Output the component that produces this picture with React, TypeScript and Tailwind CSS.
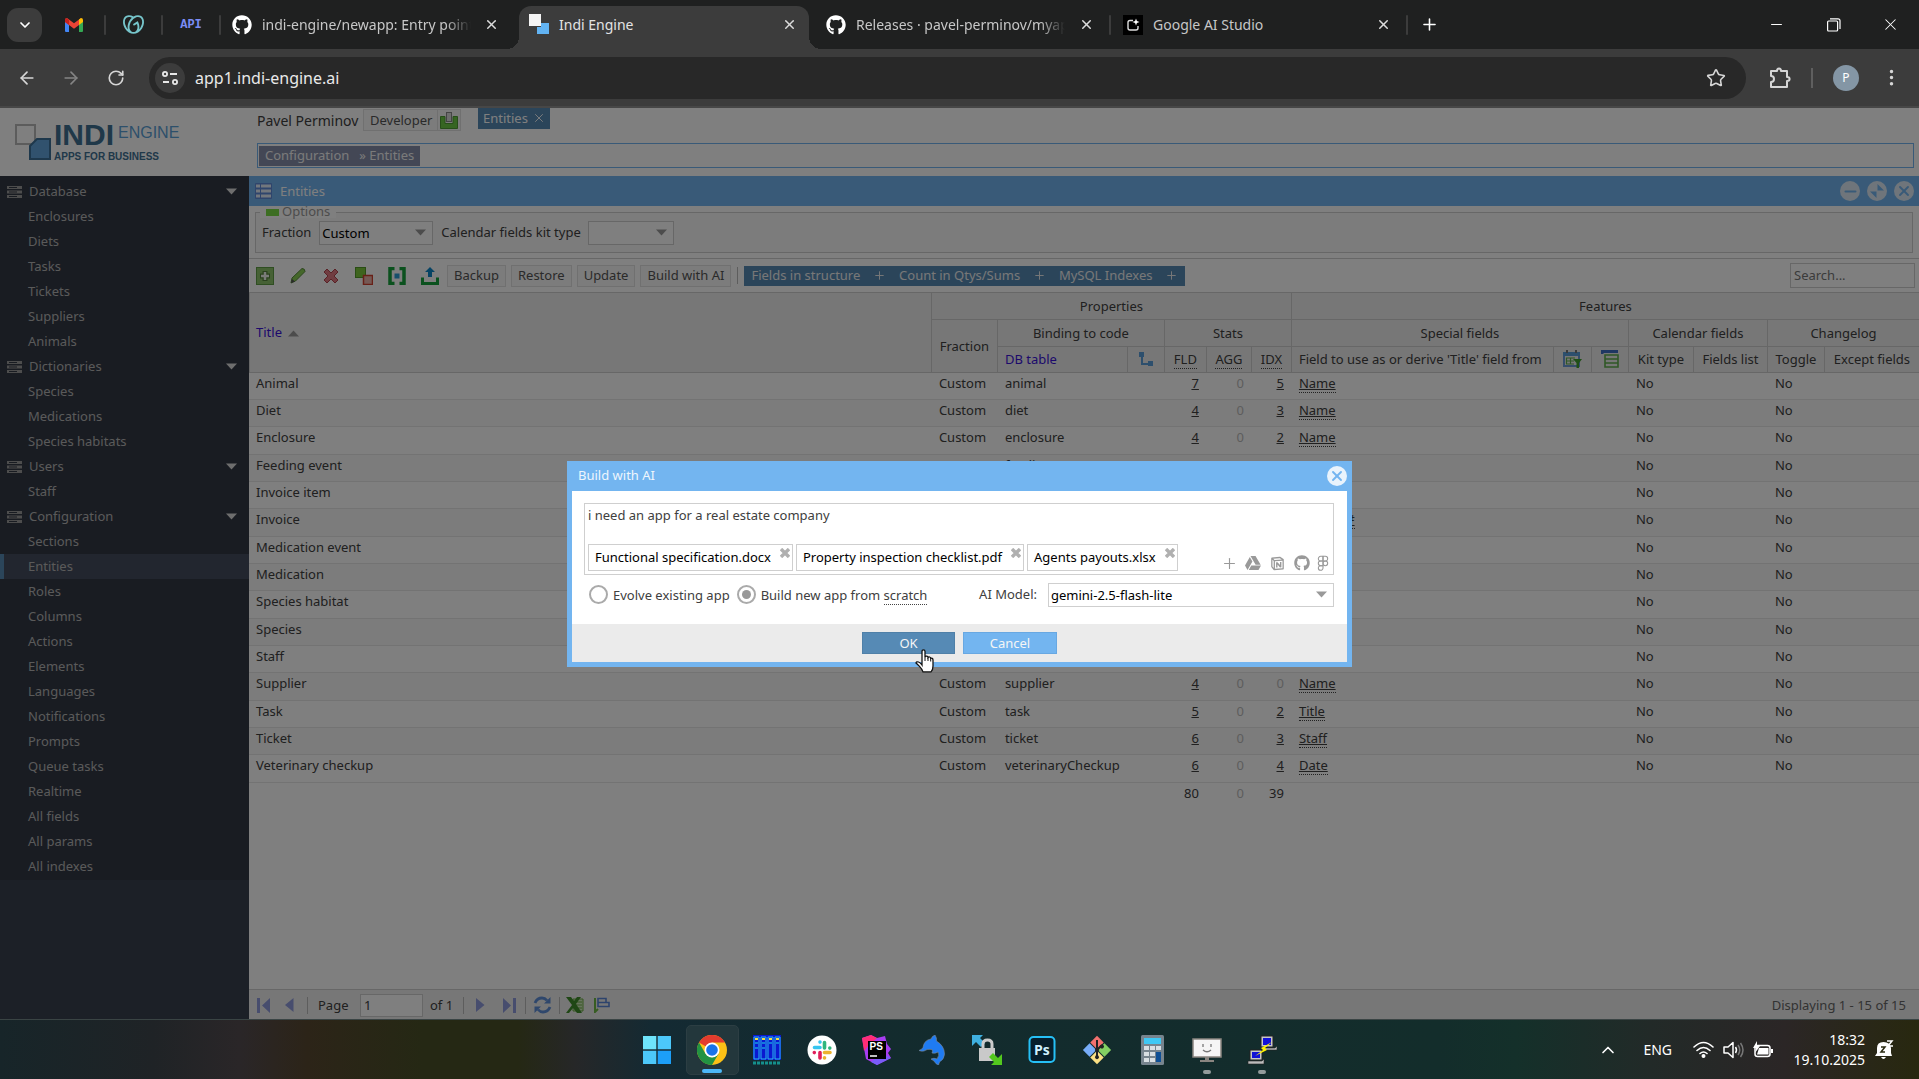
import React from 'react'
import { ArrowLeft, ArrowRight, ChevronDown, ChevronUp, EllipsisVertical, Figma, Minus, Plus, RotateCw, Star, X } from 'lucide-react'
import { FaGithub, FaGoogleDrive } from 'react-icons/fa'
import { RiNotionLine } from 'react-icons/ri'
import { SiGodaddy } from 'react-icons/si'

type Entity = [title: string, table: string, fld: number, idx: number, field: string]

const entities: Entity[] = [
  ['Animal', 'animal', 7, 5, 'Name'],
  ['Diet', 'diet', 4, 3, 'Name'],
  ['Enclosure', 'enclosure', 4, 2, 'Name'],
  ['Feeding event', 'feedingEvent', 5, 3, 'Date'],
  ['Invoice item', 'invoiceItem', 5, 2, 'Title'],
  ['Invoice', 'invoice', 6, 3, 'Invoice #'],
  ['Medication event', 'medicationEvent', 6, 3, 'Date'],
  ['Medication', 'medication', 4, 1, 'Name'],
  ['Species habitat', 'speciesHabitat', 3, 2, 'Title'],
  ['Species', 'species', 3, 1, 'Name'],
  ['Staff', 'staff', 5, 2, 'Name'],
  ['Supplier', 'supplier', 4, 0, 'Name'],
  ['Task', 'task', 5, 2, 'Title'],
  ['Ticket', 'ticket', 6, 3, 'Staff'],
  ['Veterinary checkup', 'veterinaryCheckup', 6, 4, 'Date'],
]

const menu = [
  { title: 'Database', items: ['Enclosures', 'Diets', 'Tasks', 'Tickets', 'Suppliers', 'Animals'] },
  { title: 'Dictionaries', items: ['Species', 'Medications', 'Species habitats'] },
  { title: 'Users', items: ['Staff'] },
  {
    title: 'Configuration',
    items: ['Sections', 'Entities', 'Roles', 'Columns', 'Actions', 'Elements', 'Languages', 'Notifications', 'Prompts', 'Queue tasks', 'Realtime', 'All fields', 'All params', 'All indexes'],
  },
]

const Caret = ({ className = '' }: { className?: string }) => (
  <svg className={className} width="11" height="7" viewBox="0 0 11 7" fill="currentColor">
    <path d="M0 0.5h11L5.5 6.5z" />
  </svg>
)

const TabSeparator = () => <span className="h-5 w-[2px] rounded bg-[#3c3c3c]" />

const CloseTab = ({ label }: { label: string }) => (
  <button aria-label={label} className="flex w-5 shrink-0 justify-center text-[#dcdcdc]">
    <X size={15} strokeWidth={2.4} />
  </button>
)

const IndiIcon = () => (
  <svg width="20" height="20" viewBox="0 0 20 20" className="shrink-0">
    <rect x="0" y="0" width="12" height="12" fill="#f4f4f4" />
    <path d="M12 9h8v11H8v-7h4z" fill="#62b3f2" />
  </svg>
)

const GmailIcon = () => (
  <svg width="18" height="14" viewBox="0 0 18 14">
    <path d="M0 2v11q0 1 1 1h3V5z" fill="#4285f4" />
    <path d="M18 2v11q0 1-1 1h-3V5z" fill="#34a853" />
    <path d="M4 7 0 4V2q0-2 2-2l7 5.300L16 0l-2 7-5 3.800z" fill="#ea4335" />
    <path d="M14 1.500V7l4-3V2q0-2-2-2z" fill="#fbbc04" />
    <path d="M0 4V2q0-1.500 1.500-2L4 2v5z" fill="#c5221f" />
  </svg>
)

const Browser = () => (
  <header className="shrink-0 bg-[#1f2020] font-['Noto_Sans',sans-serif] text-[14px] text-[#c7c7c7]">
    <div className="flex h-[49px] items-end">
      <div className="flex h-[49px] w-[519px] shrink-0 items-center pl-[7px]">
        <button aria-label="Search tabs" className="flex h-[34px] w-[35px] items-center justify-center rounded-[11px] bg-[#3c3c3c] text-white">
          <ChevronDown size={16} strokeWidth={2.6} />
        </button>
        <a href="#" aria-label="Gmail" className="ml-px flex w-[61px] justify-center"><GmailIcon /></a>
        <TabSeparator />
        <a href="#" aria-label="GoDaddy" className="flex w-[55px] justify-center text-[#76c5cb]"><SiGodaddy size={21} /></a>
        <TabSeparator />
        <a href="#" className="w-[56px] text-center font-['Liberation_Mono',monospace] text-[12px] font-bold text-[#7b8cf4]">API</a>
        <TabSeparator />
        <FaGithub size={20} className="ml-[11px] shrink-0 text-white" />
        <span className="ml-[10px] w-[209px] overflow-hidden whitespace-nowrap [mask-image:linear-gradient(to_right,#000_88%,transparent)]">indi-engine/newapp: Entry point</span>
        <span className="ml-[10px] flex"><CloseTab label="Close newapp tab" /></span>
      </div>
      <div className="relative flex h-[43px] w-[290px] shrink-0 items-center rounded-t-[12px] bg-[#3c3c3c] pb-[7px] pl-[10px] pr-[10px] text-[#e3e3e3] before:absolute before:bottom-0 before:-left-3 before:size-3 before:bg-[radial-gradient(circle_at_0_0,transparent_12px,#3c3c3c_12px)] after:absolute after:-right-3 after:bottom-0 after:size-3 after:bg-[radial-gradient(circle_at_100%_0,transparent_12px,#3c3c3c_12px)]">
        <IndiIcon />
        <span className="ml-[10px] flex-1">Indi Engine</span>
        <CloseTab label="Close Indi Engine tab" />
      </div>
      <div className="flex h-[49px] flex-1 items-center pl-[17px]">
        <FaGithub size={20} className="shrink-0 text-white" />
        <span className="ml-[10px] w-[209px] overflow-hidden whitespace-nowrap [mask-image:linear-gradient(to_right,#000_88%,transparent)]">Releases · pavel-perminov/myapp</span>
        <span className="ml-[11px] mr-[13px] flex"><CloseTab label="Close Releases tab" /></span>
        <TabSeparator />
        <svg className="ml-3 shrink-0" width="20" height="20" viewBox="0 0 20 20">
          <rect width="20" height="20" fill="#000" />
          <path d="M10 5.500H7q-2 0-2 2V13q0 2 2 2h6q2 0 2-2v-2" fill="none" stroke="#ddd" strokeWidth="1.400" />
          <path d="M13 3.500l.9 2.600 2.600.9-2.600.9-.9 2.600-.9-2.600-2.600-.9 2.600-.9z" fill="#fff" />
        </svg>
        <span className="ml-[10px] w-[220px]">Google AI Studio</span>
        <span className="mr-[13px] flex"><CloseTab label="Close AI Studio tab" /></span>
        <TabSeparator />
        <button aria-label="New tab" className="ml-3 text-white"><Plus size={19} strokeWidth={2} /></button>
        <div className="ml-auto flex text-white">
          <button aria-label="Minimize" className="flex w-[57px] items-center justify-center"><Minus size={17} strokeWidth={1.4} /></button>
          <button aria-label="Restore" className="flex w-[57px] items-center justify-center">
            <svg width="14" height="14" viewBox="0 0 14 14" fill="none" stroke="currentColor" strokeWidth="1.2">
              <rect x="0.6" y="3" width="10" height="10" rx="1" />
              <path d="M3 0.8h8q2 0 2 2V11" />
            </svg>
          </button>
          <button aria-label="Close" className="flex w-[57px] justify-center"><X size={19} strokeWidth={1.3} /></button>
        </div>
      </div>
    </div>
    <div className="flex h-[59px] items-center border-b-2 border-[#474747] bg-[#3c3c3c] pl-[17px] text-[#d6d6d6]">
      <button aria-label="Back" className="w-[44px]"><ArrowLeft size={20} /></button>
      <button aria-label="Forward" className="w-[46px] text-[#848484]"><ArrowRight size={20} /></button>
      <button aria-label="Reload" className="w-[42px]"><RotateCw size={18} strokeWidth={2.2} /></button>
      <div className="flex h-[42px] flex-1 items-center rounded-full bg-[#282828] pl-[6px] pr-[20px]">
        <button aria-label="Site information" className="flex size-[30px] items-center justify-center rounded-full bg-[#3c3c3c]">
          <svg width="16" height="14" viewBox="0 0 16 14" fill="none" stroke="#e8e8e8" strokeWidth="1.8">
            <circle cx="3" cy="3" r="2.1" />
            <path d="M8 3h7M1 11h6" />
            <circle cx="13" cy="11" r="2.1" />
          </svg>
        </button>
        <input aria-label="Address" defaultValue="app1.indi-engine.ai" className="ml-[10px] min-w-0 flex-1 bg-transparent text-[16px] text-[#e9e9e9] outline-none" />
        <button aria-label="Bookmark"><Star size={20} strokeWidth={1.9} /></button>
      </div>
      <button aria-label="Extensions" className="ml-[23px]">
        <svg width="22" height="22" viewBox="0 0 22 22" fill="none" stroke="currentColor" strokeWidth="2" strokeLinejoin="round">
          <path d="M2 4h6q0-2.6 2-2.6T12 4h6v6q2.600 0 2.600 2t-2.600 2v6H2v-5q3 0 3-3t-3-3z" />
        </svg>
      </button>
      <span className="ml-[20px] h-5 w-[2px] bg-[#5f5f5f]" />
      <button className="ml-5 flex size-[26px] items-center justify-center rounded-full bg-[#8496a5] text-[12px] text-white">P</button>
      <button aria-label="Menu" className="ml-[22px] mr-[17px]"><EllipsisVertical size={21} /></button>
    </div>
  </header>
)

const Logo = () => (
  <a href="#" aria-label="Indi Engine" className="flex w-[249px] shrink-0 items-start pl-[15px] pt-[16px] font-['Liberation_Sans',sans-serif] font-bold">
    <svg width="36" height="36" viewBox="0 0 36 36" className="shrink-0">
      <rect x="1" y="1" width="19" height="19" fill="#fff" stroke="#b8b8b8" strokeWidth="2" />
      <path d="M22 15h13v20H15V22z" fill="#62a5dd" stroke="#3c7199" strokeWidth="2" />
    </svg>
    <div className="-mt-1 ml-[3px]">
      <div className="flex gap-1">
        <span className="text-[30px] leading-[30px] text-[#3f7093]">INDI</span>
        <span className="pt-px text-[16px] leading-[24px] font-normal text-[#5aa0d6]">ENGINE</span>
      </div>
      <div className="text-[10px] leading-[14px] text-[#3f7093]">APPS FOR BUSINESS</div>
    </div>
  </a>
)

const TopBar = () => (
  <div className="flex h-[68px] shrink-0">
    <Logo />
    <div className="flex-1 pl-2 pr-[5px]">
      <div className="flex h-[35px] items-start">
        <span className="w-[106px] pt-[3px] text-[14px]">Pavel Perminov</span>
        <button className="mt-px flex h-[22px] items-center border border-[#e0e0e0] bg-[#f8f8f8] pl-[6px] text-[#555]">
          Developer
          <span className="ml-[5px] flex h-full items-center border-l border-[#e0e0e0] px-[2px]">
            <svg width="18" height="17" viewBox="0 0 18 17">
              <path d="M.5 4.500h4.500v7h8v-7h4.500v12H.5z" fill="#6ccb45" stroke="#4f9c33" />
              <rect x="6.500" y="0.500" width="5" height="9" fill="#ddd" stroke="#888" />
            </svg>
          </span>
        </button>
        <button className="ml-[17px] flex h-[21px] w-[72px] items-center justify-center gap-1 bg-[#568ab5] pb-px text-white">Entities <X size={14} strokeWidth={1.600} /></button>
      </div>
      <nav className="flex h-[25px] items-center border border-[#73b5f0] px-px">
        <span className="flex h-5 items-center gap-[10px] bg-[#868fab] px-[6px] pb-[2px] text-[#f5f5f5]"><a href="#">Configuration</a><a href="#">» Entities</a></span>
      </nav>
    </div>
  </div>
)

const Sidebar = () => (
  <nav className="w-[249px] shrink-0 bg-[#38404f]">
    <div className="bg-[#333945] pb-px pt-[3px] text-[#b5b5b5]">
      {menu.map((group) => (
        <div key={group.title}>
          <button className="flex h-[25px] w-full items-center pl-[7px] pr-[12px]">
            <svg width="15" height="12" viewBox="0 0 15 12" className="mr-[7px]">
              <path d="M0 0h15v3H0zM0 4.500h15v3H0zM0 9h15v3H0z" fill="#9a9a9a" />
              <path d="M2 1.500h8M2 6h8M2 10.500h8" stroke="#333945" strokeWidth="1" />
            </svg>
            <span className="pb-[2px]">{group.title}</span>
            <Caret className="ml-auto text-[#dcdcdc]" />
          </button>
          {group.items.map((item) => (
            <a key={item} href="#" className={item === 'Entities' ? 'flex h-[25px] items-center border-l-4 border-[#568ab5] bg-[#454d5e] pb-[2px] pl-6' : 'flex h-[25px] items-center pb-[2px] pl-7'}>{item}</a>
          ))}
        </div>
      ))}
    </div>
  </nav>
)

const PanelTitle = () => (
  <div className="flex h-[30px] shrink-0 items-center bg-[#73b5f0] pl-[6px] pr-[5px] text-white">
    <svg width="17" height="16" viewBox="0 0 17 16" className="mr-2">
      <rect width="17" height="16" rx="1" fill="#5f8ad8" />
      <path d="M1 1.500h4v3H1zM6 1.500h10v3H6zM1 6.500h4v3H1zM6 6.500h10v3H6zM1 11.500h4v3H1zM6 11.500h10v3H6z" fill="#e4effb" />
    </svg>
    <span className="pb-px">Entities</span>
    <div className="ml-auto flex gap-[7px] text-[#73b5f0]">
      <button aria-label="Minimize panel" className="flex size-5 items-center justify-center rounded-full bg-[#deebf6]"><Minus size={17} strokeWidth={3} /></button>
      <button aria-label="Maximize panel" className="flex size-5 items-center justify-center rounded-full bg-[#deebf6]">
        <svg width="16" height="16" viewBox="0 0 16 16" fill="currentColor"><path d="M8.500 1 15 7.500H8.500zM1 8.500h6.500V15z" /></svg>
      </button>
      <button aria-label="Close panel" className="flex size-5 items-center justify-center rounded-full bg-[#deebf6]"><X size={16} strokeWidth={2.800} /></button>
    </div>
  </div>
)

const Options = () => (
  <div className="shrink-0 px-[6px] pb-[5px]">
    <fieldset className="h-[47px] border border-[#cfcfcf] bg-[#f8f8f8] px-[6px]">
      <legend className="ml-[-2px] flex h-[12px] items-center gap-[3px] bg-white pl-[6px] pr-[6px] text-[#999]">
        <span className="mt-px h-[7px] w-[13px] bg-[#7bdc47]" /><span className="pb-[2px]">Options</span>
      </legend>
      <div className="mt-[3px] flex items-center">
        <label htmlFor="fraction" className="pb-[2px]">Fraction</label>
        <div className="relative ml-2">
          <select id="fraction" defaultValue="Custom" className="h-6 w-[114px] appearance-none border border-[#cfcfcf] bg-white px-[2px] text-black">
            <option>Custom</option>
          </select>
          <Caret className="pointer-events-none absolute right-[7px] top-2 text-[#999]" />
        </div>
        <label htmlFor="kit" className="ml-2 pb-[2px]">Calendar fields kit type</label>
        <div className="relative ml-[7px]">
          <select id="kit" className="h-6 w-[86px] appearance-none border border-[#cfcfcf] bg-white px-[2px]">
            <option></option>
          </select>
          <Caret className="pointer-events-none absolute right-[7px] top-2 text-[#999]" />
        </div>
      </div>
    </fieldset>
  </div>
)

const toolIcons: [string, React.ReactNode][] = [
  ['Create', <><rect x="0.500" y="0.500" width="17" height="17" fill="#8cc26b" stroke="#5f9c44" /><path d="M9 4v10M4 9h10" stroke="#55823c" strokeWidth="5" /><path d="M9 5v8M5 9h8" stroke="#f3f7f0" strokeWidth="2.500" /></>],
  ['Edit', <><path d="M2 16l1-5L13 1.500q3 0 3 3L6.500 14z" fill="#8ace54" stroke="#57893a" /><path d="M2 16l1-4 3 2.500z" fill="#555" /></>],
  ['Delete', <path d="M5 2 9 6l4-4 3 3-4 4 4 4-3 3-4-4-4 4-3-3 4-4-4-4z" fill="#e07a82" stroke="#b4444f" />],
  ['Toggle', <><rect x="0.500" y="0.500" width="10" height="10" fill="#7cc83c" stroke="#549a2a" /><rect x="8.500" y="8.500" width="9" height="9" fill="#eab3ab" stroke="#d0402f" strokeWidth="1.500" /></>],
  ['Brackets', <><path d="M6.500 1.500H2v15h4.500M11.500 1.500H16v15h-4.500" fill="none" stroke="#17a23c" strokeWidth="3.500" /><rect x="6.500" y="6.500" width="5" height="5" fill="#2f9ed6" /></>],
  ['Upload', <><path d="M1.500 10.500v6h15v-6" fill="none" stroke="#17a23c" strokeWidth="3" /><path d="M9 0l5 5h-3v5H7V5H4z" fill="#0e87c8" /></>],
]

const quickFields = ['Fields in structure', 'Count in Qtys/Sums', 'MySQL Indexes']

const Toolbar = () => (
  <div className="flex h-[35px] shrink-0 items-center border-y border-[#cfcfcf] pl-[7px] pr-[4px]">
    <div className="flex gap-[15px]">
      {toolIcons.map(([name, icon]) => (
        <button key={name} aria-label={name}><svg width="18" height="18" viewBox="0 0 18 18">{icon}</svg></button>
      ))}
    </div>
    <div className="ml-[8px] flex gap-[5px] text-[#555]">
      {['Backup', 'Restore', 'Update', 'Build with AI'].map((name) => (
        <button key={name} className="h-[22px] border border-[#e0e0e0] bg-[#f8f8f8] px-[6px] pb-px leading-[19px]">{name}</button>
      ))}
    </div>
    <span className="ml-[6px] mr-[6px] h-[17px] w-px bg-[#bbb]" />
    <div className="flex h-5 w-[441px] items-center justify-between bg-[#568ab5] px-[7px] text-[#f0f0f0]">
      {quickFields.map((name) => (
        <React.Fragment key={name}>
          <span className="pb-px">{name}</span>
          <button aria-label={'Add ' + name}><Plus size={13} strokeWidth={1.800} /></button>
        </React.Fragment>
      ))}
    </div>
    <input aria-label="Search" placeholder="Search..." className="ml-auto h-[25px] w-[125px] border border-[#cfcfcf] bg-white px-[3px] pb-px placeholder:text-[#777]" />
  </div>
)

const columns = ['', 'w-[66px]', 'w-[130px]', 'w-[37px]', 'w-[42px]', 'w-[45px]', 'w-[40px]', 'w-[262px]', 'w-[38px]', 'w-[37px]', 'w-[65px]', 'w-[74px]', 'w-[57px]', 'w-[95px]']

const Grid = () => (
  <div className="min-h-0 flex-1">
    <table className="w-full table-fixed border-separate border-spacing-0 whitespace-nowrap [&_td]:align-top [&_td]:leading-[21px] [&_th]:border-b [&_th]:border-l [&_th]:border-[#cfcfcf] [&_th]:pb-px [&_th]:font-normal">
      <colgroup>
        {columns.map((width, i) => <col key={i} className={width} />)}
      </colgroup>
      <thead className="bg-[#efefef]">
        <tr className="h-[27px]">
          <th rowSpan={3} className="pl-[6px] text-left text-[#3a12d8]">Title <Caret className="ml-[3px] inline rotate-180 text-[#999]" /></th>
          <th colSpan={6}>Properties</th>
          <th colSpan={7}>Features</th>
        </tr>
        <tr className="h-[27px]">
          <th rowSpan={2}>Fraction</th>
          <th colSpan={2}>Binding to code</th>
          <th colSpan={3}>Stats</th>
          <th colSpan={3}>Special fields</th>
          <th colSpan={2}>Calendar fields</th>
          <th colSpan={2}>Changelog</th>
        </tr>
        <tr className="h-[26px]">
          <th className="pl-[7px] text-left text-[#3a12d8]">DB table</th>
          <th aria-label="Parent">
            <svg className="mx-auto" width="16" height="16" viewBox="0 0 16 16" fill="#5b9fdb"><path d="M1 1h5v5H5v6h5v-2h5v5h-5v-1H3V6H1z" /></svg>
          </th>
          <th><span className="border-b border-dotted border-[#444]">FLD</span></th>
          <th><span className="border-b border-dotted border-[#444]">AGG</span></th>
          <th><span className="border-b border-dotted border-[#444]">IDX</span></th>
          <th className="pl-[7px] text-left">Field to use as or derive 'Title' field from</th>
          <th aria-label="Date filter">
            <svg className="mx-auto" width="20" height="18" viewBox="0 0 20 18" fill="none">
              <path d="M2 3h15v13H2z" stroke="#6c9bd8" strokeWidth="2" />
              <path d="M1 2h17v4H1z" fill="#5b9fdb" />
              <path d="M5 0v3M14 0v3" stroke="#777" strokeWidth="2" />
              <path d="M4 8h9M4 11h8M4 14h8M4.500 8v6M8.500 8v6" stroke="#5fb04c" strokeWidth="1.200" />
              <path d="M11 9h9l-3 4v5h-2.500v-5z" fill="#3fa02c" />
            </svg>
          </th>
          <th aria-label="List">
            <svg className="mx-auto" width="18" height="18" viewBox="0 0 18 18" fill="none">
              <path d="M1 4V1.500h16" stroke="#3f6fc4" strokeWidth="3" />
              <path d="M4 5h13v12H4zM4 9h13M4 13h13" stroke="#5fb04c" strokeWidth="1.600" />
            </svg>
          </th>
          <th>Kit type</th>
          <th>Fields list</th>
          <th>Toggle</th>
          <th>Except fields</th>
        </tr>
      </thead>
      <tbody>
        {entities.map(([title, table, fld, idx, field]) => (
          <tr key={title} className="h-[27px] even:bg-[#f8f8f8] [&:nth-child(3n)]:h-[28px] [&>td]:border-b [&>td]:border-[#e6e6e6]">
            <td className="pl-[7px]">{title}</td>
            <td className="pl-2">Custom</td>
            <td className="pl-2">{table}</td>
            <td></td>
            <td className="pr-[7px] text-right"><a href="#" className="underline">{fld}</a></td>
            <td className="pr-[7px] text-right text-[#bbb]">0</td>
            <td className="pr-[7px] text-right">{idx ? <a href="#" className="underline">{idx}</a> : <span className="text-[#bbb]">0</span>}</td>
            <td className="pl-2"><a href="#" className="border-b border-dotted border-[#444] underline">{field}</a></td>
            <td></td>
            <td></td>
            <td className="pl-2">No</td>
            <td></td>
            <td className="pl-2">No</td>
            <td></td>
          </tr>
        ))}
      </tbody>
      <tfoot>
        <tr>
          <td colSpan={4}></td>
          <td className="pr-[7px] text-right">80</td>
          <td className="pr-[7px] text-right text-[#bbb]">0</td>
          <td className="pr-[7px] text-right">39</td>
          <td colSpan={7}></td>
        </tr>
      </tfoot>
    </table>
  </div>
)

const PageSeparator = () => <span className="h-[17px] w-px bg-[#bbb]" />

const Paging = () => (
  <div className="flex h-[30px] shrink-0 items-center border-t border-[#cfcfcf] bg-[#efefef] pl-[8px] pr-[13px] pt-px text-[#8f9bdc]">
    <button aria-label="First page"><svg width="14" height="15" viewBox="0 0 14 15" fill="currentColor"><path d="M0 0h3v15H0zM13 0v15L5 7.500z" /></svg></button>
    <button aria-label="Previous page" className="ml-[14px] mr-[13px]"><svg width="9" height="14" viewBox="0 0 9 14" fill="currentColor"><path d="M8.500 0v14L0 7z" /></svg></button>
    <PageSeparator />
    <label htmlFor="page" className="ml-[10px] w-[42px] text-[#404040]">Page</label>
    <input id="page" defaultValue="1" className="h-[23px] w-[63px] border border-[#cfcfcf] bg-white px-[3px] text-[#404040]" />
    <span className="ml-[7px] w-[33px] text-[#404040]">of 1</span>
    <PageSeparator />
    <button aria-label="Next page" className="ml-3"><svg width="9" height="14" viewBox="0 0 9 14" fill="currentColor"><path d="M0 0v14l8.500-7z" /></svg></button>
    <button aria-label="Last page" className="ml-[18px] mr-[9px]"><svg width="13" height="15" viewBox="0 0 13 15" fill="currentColor"><path d="M10 0h3v15h-3zM0 0v15l8-7.500z" /></svg></button>
    <PageSeparator />
    <button aria-label="Refresh" className="mx-[7px]">
      <svg width="19" height="18" viewBox="0 0 19 18" fill="none" stroke="#5f8fd8" strokeWidth="2.800">
        <path d="M2 7q2-5 7-5 3 0 5 2.500M17 11q-2 5-7 5-3 0-5-2.500" />
        <path d="M17.500 1v6.500H11zM1.500 17v-6.500H8z" fill="#5f8fd8" stroke="none" />
      </svg>
    </button>
    <PageSeparator />
    <button aria-label="Export to Excel" className="ml-[6px]">
      <svg width="18" height="16" viewBox="0 0 18 16"><path d="M7 2h10v12H7z" fill="#cfe8bd" stroke="#6cae45" /><path d="M9 5h7M9 8h7M9 11h7" stroke="#6cae45" /><path d="M0 0h5l3 4 3-4h4l-5 7 6 9h-5l-4-5-4 5H0l6-8z" fill="#3f8f2a" /></svg>
    </button>
    <button aria-label="Row numbers" className="ml-[9px]">
      <svg width="18" height="16" viewBox="0 0 18 16" fill="none"><path d="M2 1v14l3-3" stroke="#6fbb45" strokeWidth="2" /><path d="M5 1.500h8v4H5zM5 5.500h11v4H5z" stroke="#5b86d8" strokeWidth="1.600" /></svg>
    </button>
    <span className="ml-auto text-[#666]">Displaying 1 - 15 of 15</span>
  </div>
)

const files = ['Functional specification.docx', 'Property inspection checklist.pdf', 'Agents payouts.xlsx']

const BuildDialog = () => (
  <form role="dialog" aria-label="Build with AI" className="relative w-[785px] border-[5px] border-t-0 border-[#73b5f0] bg-white">
    <div className="flex h-[30px] items-center justify-between bg-[#73b5f0] pl-[6px] text-[#eef6fd]">
      <span className="pb-[2px]">Build with AI</span>
      <button type="button" aria-label="Close dialog" className="flex size-5 items-center justify-center rounded-full bg-[#e9f3fc] text-[#73b5f0]"><X size={16} strokeWidth={2.800} /></button>
    </div>
    <div className="h-[133px] pl-3 pr-[13px] pt-3">
      <div className="h-[72px] border border-[#cfcfcf] px-[3px]">
        <textarea aria-label="Prompt" defaultValue="i need an app for a real estate company" className="block h-10 w-full resize-none leading-[22px] outline-none" />
        <div className="flex items-start gap-[3px]">
          {files.map((file) => (
            <div key={file} className="flex h-[27px] items-center border border-[#cfcfcf] pl-[6px] pr-[2px] text-black">
              {file}
              <button type="button" aria-label={'Remove ' + file} className="ml-[9px] self-start pt-[3px] text-[#b0b0b0]">
                <svg width="10" height="10" viewBox="0 0 10 10" stroke="currentColor" strokeWidth="3.400"><path d="M1 1l8 8M9 1L1 9" /></svg>
              </button>
            </div>
          ))}
          <div className="ml-auto flex items-center gap-2 self-end pr-[2px] pt-[11px] text-[#999]">
            <button type="button" aria-label="Attach file" className="-mr-px"><Plus size={17} strokeWidth={1.600} /></button>
            <button type="button" aria-label="Google Drive"><FaGoogleDrive size={16} /></button>
            <button type="button" aria-label="Notion"><RiNotionLine size={17} /></button>
            <button type="button" aria-label="GitHub"><FaGithub size={16} /></button>
            <button type="button" aria-label="Figma" className="-mx-[3px]"><Figma size={16} strokeWidth={1.600} /></button>
          </div>
        </div>
      </div>
      <div className="mt-2 flex items-center">
        <input id="evolve" type="radio" name="mode" className="ml-[5px] size-[19px] appearance-none rounded-full border-2 border-[#aaa] bg-white" />
        <label htmlFor="evolve" className="ml-[5px]">Evolve existing app</label>
        <input id="scratch" type="radio" name="mode" defaultChecked className="ml-[7px] size-[19px] appearance-none rounded-full border-2 border-[#aaa] bg-[#999] bg-clip-content p-[3px]" />
        <label htmlFor="scratch" className="ml-[5px]">Build new app from <span className="border-b border-dotted border-[#444]">scratch</span></label>
        <label htmlFor="model" className="ml-auto pb-[2px]">AI Model:</label>
        <div className="relative ml-[11px]">
          <select id="model" defaultValue="gemini-2.5-flash-lite" className="h-6 w-[286px] appearance-none border border-[#cfcfcf] bg-white px-[2px] text-black">
            <option>gemini-2.5-flash-lite</option>
          </select>
          <Caret className="pointer-events-none absolute right-[7px] top-2 text-[#999]" />
        </div>
      </div>
    </div>
    <div className="flex h-[38px] items-start justify-center gap-2 bg-[#ebebeb] pt-2 text-[#f5f5f5]">
      <button className="h-[22px] w-[93px] border border-[#4f80a8] bg-[#568ab5]">OK</button>
      <button type="button" className="h-[22px] w-[94px] border border-[#68a8e2] bg-[#73b5f0]">Cancel</button>
    </div>
    {/* mouse pointer resting on OK */}
    <svg className="absolute left-[343px] top-[188px]" width="19" height="25" viewBox="0 0 19 25">
      <path d="M7 15V2.500q0-1.700 1.500-1.700T10 2.500V8q.5-1 1.700-.8T13 8.500q.6-.8 1.600-.5t1.100 1.400q.7-.5 1.500 0t.8 1.500v6q0 4-2 6H8q-1-3-3.500-5.500T1 14q.5-1.700 2.500-1T7 16z" fill="#fff" stroke="#111" strokeWidth="1.300" />
      <path d="M10 8v4M13 9v3M15.700 10v2.500" stroke="#111" />
    </svg>
  </form>
)

const apps: [string, React.ReactNode][] = [
  ['Start', <><path d="M1 1h13.300v13.300H1z" fill="#6ee4fb" /><path d="M15.700 1H29v13.300H15.700zM1 15.700h13.300V29H1z" fill="#4cc8fa" /><path d="M15.700 15.700H29V29H15.700z" fill="#1c9ff8" /></>],
  ['Chrome', <><circle cx="15" cy="15" r="15" fill="#fbc116" /><path d="M15 15 2 7.500A15 15 0 0 1 28 7.500H15z" fill="#e33b2e" /><path d="M15 22.500 8.500 18.700 2 7.500A15 15 0 0 0 15 30l6.500-11.200z" fill="#229342" /><circle cx="15" cy="15" r="7.500" fill="#fff" /><circle cx="15" cy="15" r="5.800" fill="#1a73e8" /></>],
  ['Far Manager', <><path d="M1 0h28v25H1z" fill="#0a18d0" /><path d="M2 2h5v22H2zM9 2h5v22H9zM16 2h5v22h-5zM23 2h5v22h-5z" fill="none" stroke="#2ab8f0" /><path d="M3 4h3M10 4h3M17 4h3M24 4h3" stroke="#f0e048" strokeWidth="2" /><path d="M3 8h3M10 8h3M17 8h3M24 8h3M3 13h3M10 13h3" stroke="#18e0e8" /><path d="M1 28h28" stroke="#14908c" strokeWidth="3" strokeDasharray="3 1" /></>],
  ['Slack', <><circle cx="15" cy="15" r="14.500" fill="#fff" /><g strokeWidth="3.600" strokeLinecap="round"><path d="M13 7v.1M7.500 12.500H13" stroke="#36c5f0" /><path d="M17.500 7.500V13M22.800 13v.1" stroke="#2eb67d" /><path d="M17.500 17.500h5.500M17.500 22.800v.1" stroke="#ecb22e" /><path d="M13 17.500V23M7.300 17.500v.1" stroke="#e01e5a" /></g></>],
  ['PhpStorm', <><path d="M0 3l9-3 6 3 8-2 2 8 4 5-3 4 3 5-14 7-11-6z" fill="#a83df2" /><path d="M0 3l9-3 6 3-9 8-4 5z" fill="#ff2d78" /><path d="M20 18l9 5-14 7-6-3z" fill="#7a5cf8" /><path d="M6 6h18v18H6z" fill="#000" /><text x="7.500" y="15" fontSize="10" fontWeight="bold" fill="#fff" fontFamily="Liberation Sans">PS</text><path d="M8 21h7" stroke="#fff" strokeWidth="1.500" /></>],
  ['MySQL', <path d="M18 0q2 3 1.500 6 8 5 8 13 0 5-5 8l-1 3q-3-1-4.500-4l-3-2q3-1.500 6 0 3-4 1-7-3 2-6 1 1-2 0-3.500-5-1-8 1.500-3 .5-5-.5 3-1 4-3Q7 5 14 4q1-3 4-4z" fill="#1f7bf2" stroke="#7d8a96" strokeWidth=".6" />],
  ['WinSCP', <><path d="M0 0h11l-3 3 5 5-4 4-5-5-4 4z" fill="#3fb0e0" /><path d="M11 15V9q0-4 4.500-4T20 9v6" fill="none" stroke="#ccc" strokeWidth="3" /><rect x="7" y="13" width="16" height="13" fill="#c9c9c9" /><path d="M30 30H19l3-3-5-5 4-4 5 5 4-4z" fill="#53c81e" /></>],
  ['Photoshop', <><rect x="2.500" y="2" width="25" height="25" rx="4" fill="#061e2c" stroke="#26c0f6" strokeWidth="2" /><text x="7" y="20" fontSize="14" fontWeight="bold" fill="#cfefff" fontFamily="Open Sans">Ps</text></>],
  ['Git', <g transform="rotate(45 15 15)"><path d="M5 5h9.500v9.500H5z" fill="#f2716f" /><path d="M15.500 5H25v9.500h-9.500z" fill="#84cf62" /><path d="M5 15.500h9.500V25H5z" fill="#78adf8" /><path d="M15.500 15.500H25V25h-9.500z" fill="#fbe084" /><path d="M8 8l13 13M15 14v-5" stroke="#222" strokeWidth="2" /><circle cx="15" cy="15" r="2" fill="#222" /><circle cx="20" cy="20" r="2" fill="#222" /><circle cx="16" cy="9" r="2" fill="#222" /></g>],
  ['Calculator', <><rect x="4" y="0" width="23" height="30" rx="1.500" fill="#77848e" /><path d="M7 3h17v6H7z" fill="#3fc8f4" /><path d="M7 11h5v4H7zM13 11h5v4h-5zM19 11h5v4h-5zM7 17h5v4H7zM13 17h5v4h-5zM7 23h5v4H7zM13 23h5v4h-5z" fill="#d9dfe3" /><path d="M19 17h5v10h-5z" fill="#0f4f95" /></>],
  ['Recorder', <><path d="M1 4h28v18H1z" fill="#f5f5f5" stroke="#8a8580" strokeWidth="1.500" /><path d="M11 9v3M19 9v3M11 15q4 3.500 8 0" fill="none" stroke="#777" strokeWidth="1.300" /><path d="M13 22h4v3h5v2H8v-2h5z" fill="#8a8580" /></>],
  ['PuTTY', <><path d="M14 1h12v11H14zM3 15h12v10H3z" fill="#c6c6c6" stroke="#222" /><path d="M16 3h8v7h-8zM5 17h8v6H5z" fill="#1111d8" /><path d="M16 13h12l2-2v4H16zM1 26h14l2-2v5H1z" fill="#bbb" stroke="#222" strokeWidth=".6" /><path d="M25 7 14 13l2 2-8 6 12-6-2-2z" fill="#fff200" /></>],
]

const Taskbar = () => (
  <footer className="relative flex h-[60px] shrink-0 items-center justify-center border-t border-[#3a4444] bg-[linear-gradient(90deg,#172529_0%,#1f2326_8%,#2a2628_12.500%,#2c2418_16%,#252814_22%,#252814_27%,#262728_30%,#142a33_34%,#132b2e_45%,#132d2b_75%,#14302a_79%,#222a28_86%,#2b2626_93%,#28280f_100%)] font-['Noto_Sans',sans-serif] text-[14px] text-white">
    <nav className="flex">
      {apps.map(([name, icon]) => (
        <button key={name} aria-label={name} className={name === 'Chrome' ? 'mx-px relative flex h-[50px] w-[53px] items-center justify-center rounded-[5px] border border-[#2c3e43] bg-[#23373c]' : 'relative flex h-[50px] w-[55px] items-center justify-center'}>
          <svg width="30" height="30" viewBox="0 0 30 30">{icon}</svg>
          {name === 'Chrome' && <span className="absolute bottom-[1px] h-[4px] w-5 rounded-full bg-[#4cb8f8]" />}
          {(name === 'Recorder' || name === 'PuTTY') && <span className="absolute bottom-[1px] h-[4px] w-2 rounded-full bg-[#939b9b]" />}
        </button>
      ))}
    </nav>
    <div className="absolute right-[25px] flex items-center">
      <button aria-label="Hidden icons"><ChevronUp size={20} /></button>
      <button className="ml-[25px]">ENG</button>
      <svg className="ml-[21px]" width="21" height="17" viewBox="0 0 21 17" fill="none" stroke="currentColor" strokeWidth="1.600" strokeLinecap="round">
        <path d="M1 6q9.500-9 19 0M4 9.500q6.500-6 13 0M7 12.500q3.500-3 7 0" /><circle cx="10.500" cy="15" r="1.200" fill="currentColor" />
      </svg>
      <svg className="ml-[9px]" width="21" height="18" viewBox="0 0 21 18" fill="none" stroke="currentColor" strokeWidth="1.500" strokeLinejoin="round">
        <path d="M1 6h4l5-4.500v15L5 12H1zM12.500 6q2 3 0 6" /><path d="M15 4q3.500 5 0 10M17.500 2q5 7 0 14" stroke="#777" />
      </svg>
      <svg className="ml-[9px]" width="21" height="17" viewBox="0 0 21 17">
        <rect x="2" y="4.500" width="15" height="11" rx="2.500" fill="none" stroke="#fff" strokeWidth="1.500" /><path d="M6 7h9.500v6.500H4zM18 8h2v4h-2zM4 0 0 7h3l-1 5 5-7H4z" fill="#fff" />
      </svg>
      <div className="w-[91px] text-right leading-5">18:32<br />19.10.2025</div>
      <svg className="ml-[10px]" width="19" height="20" viewBox="0 0 19 20">
        <path d="M2 13V8q0-6 6.500-6T16 8v5l1 3H0zM6 17h5q-2.500 4-5 0z" fill="#fff" /><path d="M6 7h4l-4 5h4" fill="none" stroke="#28280f" strokeWidth="1.500" /><path d="M12 1h5l-4 5h5" fill="none" stroke="#fff" strokeWidth="1.500" />
      </svg>
    </div>
  </footer>
)

const App: React.FC = () => {
  return (
    <div className="flex h-screen flex-col overflow-hidden">
      <Browser />
      <div className="relative flex min-h-0 flex-1 flex-col bg-white font-['Noto_Sans',sans-serif] text-[13px] leading-5 text-[#404040]">
        <TopBar />
        <div className="flex min-h-0 flex-1">
          <Sidebar />
          <main className="flex min-w-0 flex-1 flex-col">
            <PanelTitle />
            <Options />
            <Toolbar />
            <Grid />
            <Paging />
          </main>
        </div>
        <div className="absolute inset-0 flex items-center justify-center bg-black/50">
          <BuildDialog />
        </div>
      </div>
      <Taskbar />
    </div>
  )
}

export default App
